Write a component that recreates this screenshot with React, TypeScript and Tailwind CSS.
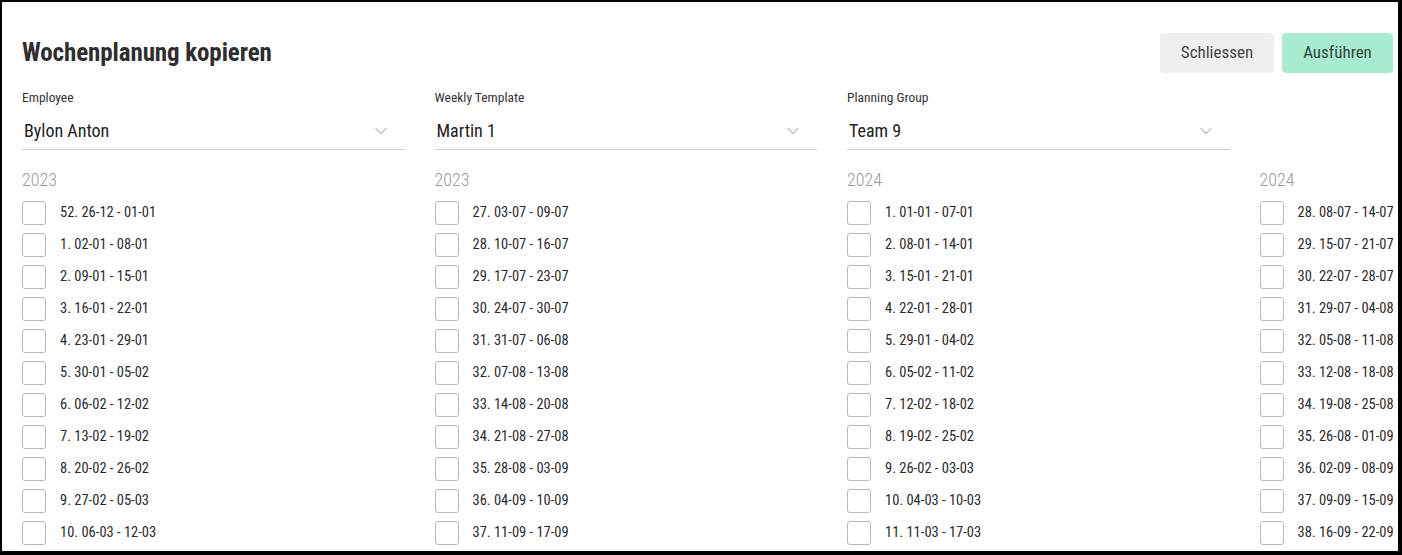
import { ChevronDown } from 'lucide-react';

// Wochenplanung kopieren — copy a weekly plan onto a set of calendar weeks.

type Week = { id: string; label: string };

const pad = (n: number) => String(n).padStart(2, '0');

// Build `count` consecutive weeks starting on the given Monday (UTC).
function weeks(start: [number, number, number], firstWeek: number, count: number): Week[] {
  const out: Week[] = [];
  const base = Date.UTC(start[0], start[1] - 1, start[2]);
  for (let i = 0; i < count; i++) {
    const from = new Date(base + i * 7 * 86400000);
    const to = new Date(base + (i * 7 + 6) * 86400000);
    const nr = ((firstWeek - 1 + i) % 52) + 1;
    out.push({
      id: `${from.getUTCFullYear()}-${nr}`,
      label: `${nr}. ${pad(from.getUTCDate())}-${pad(from.getUTCMonth() + 1)} - ${pad(to.getUTCDate())}-${pad(to.getUTCMonth() + 1)}`,
    });
  }
  return out;
}

const columns = [
  { year: '2023', weeks: weeks([2022, 12, 26], 52, 11) },
  { year: '2023', weeks: weeks([2023, 7, 3], 27, 11) },
  { year: '2024', weeks: weeks([2024, 1, 1], 1, 11) },
  { year: '2024', weeks: weeks([2024, 7, 8], 28, 11) },
];

const selects = [
  { label: 'Employee', value: 'Bylon Anton' },
  { label: 'Weekly Template', value: 'Martin 1' },
  { label: 'Planning Group', value: 'Team 9' },
];

function Select({ label, value }: { label: string; value: string }) {
  return (
    <div>
      <div className="text-[13.5px] leading-4 text-[#333]">{label}</div>
      <div className="mt-[7px] flex h-[38px] items-center justify-between border-b border-[#cfcfcf] pl-[2px] pr-[14px]">
        <span className="text-[18px] text-[#222]">{value}</span>
        <ChevronDown className="h-5 w-5 text-[#c6c6c6]" strokeWidth={2} />
      </div>
    </div>
  );
}

function WeekRow({ label }: { label: string }) {
  return (
    <label className="flex h-6 items-center gap-[14px]">
      <span className="h-6 w-6 shrink-0 rounded-[3px] border border-[#b8b8b8] bg-white" />
      <span className="whitespace-nowrap text-[14.5px] text-[#2b2b2b]">{label}</span>
    </label>
  );
}

export default function App() {
  return (
    <div
      className="h-[555px] w-[1402px] overflow-hidden border-t-2 border-l-2 border-r-4 border-b-[4px] border-black bg-white"
      style={{ fontFamily: '"Roboto Condensed", Roboto, "Liberation Sans", sans-serif' }}
    >
      <div className="pl-5 pr-[5px] pt-[31px]">
        <div className="flex h-10 items-center justify-between">
          <h1 className="text-[25px] font-bold tracking-[-0.1px] text-[#2e2e2e]">Wochenplanung kopieren</h1>
          <div className="flex gap-2">
            <button className="h-10 w-[114px] rounded-[4px] bg-[#efefef] text-[17px] text-[#444]">Schliessen</button>
            <button className="h-10 w-[111px] rounded-[4px] bg-[#a8ecd0] text-[17px] text-[#34443e]">Ausführen</button>
          </div>
        </div>

        <div className="mt-4 grid grid-cols-[repeat(4,382.5px)] gap-x-[30px]">
          {selects.map(s => (
            <Select key={s.label} label={s.label} value={s.value} />
          ))}
        </div>

        <div className="mt-[18px] grid grid-cols-[repeat(4,382.5px)] gap-x-[30px]">
          {columns.map((col, i) => (
            <div key={i}>
              <div className="text-[18px] font-light leading-6 text-[#999]">{col.year}</div>
              <div className="mt-[9px] flex flex-col gap-2">
                {col.weeks.map(w => (
                  <WeekRow key={w.id} label={w.label} />
                ))}
              </div>
            </div>
          ))}
        </div>
      </div>
    </div>
  );
}
